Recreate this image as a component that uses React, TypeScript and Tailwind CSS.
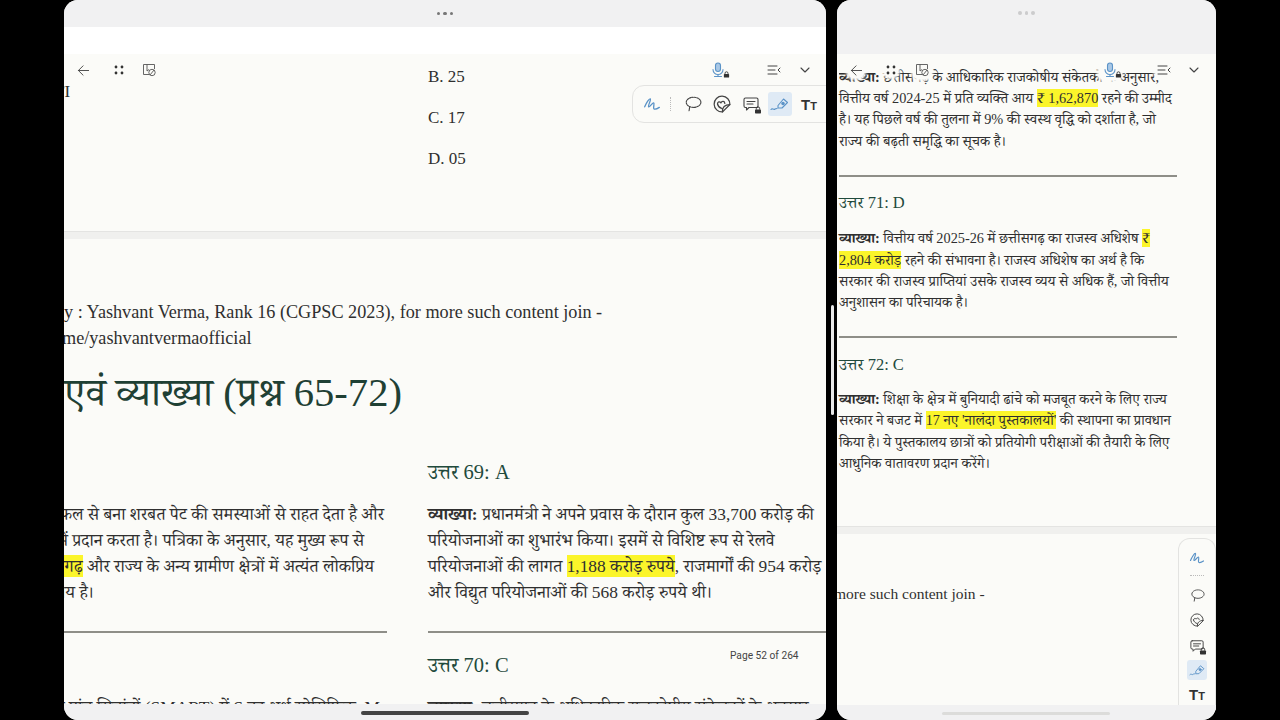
import React from 'react';

const serif = "font-['Liberation_Serif','Noto_Serif_Devanagari','Noto_Sans_Devanagari','Noto_Sans',serif]";

const Hl: React.FC<{ children: React.ReactNode }> = ({ children }) => (
  <span className="bg-[#fbf52a] py-[1px]">{children}</span>
);

const Scribble = ({ className }: { className: string }) => (
  <svg viewBox="0 0 16 16" fill="none" stroke="#5b93c7" strokeWidth="1.2" strokeLinecap="round" strokeLinejoin="round" className={className}>
    <path d="M1.5 10.5 C3 7 5.5 3 6.5 3.5 C7.5 4 4 10 5 10.5 C6 11 8.5 6.5 9.5 7 C10.5 7.5 8.5 12 10 12.5 C11 12.8 13 12 14.5 11" />
  </svg>
);

const Lasso = ({ className }: { className: string }) => (
  <svg viewBox="0 0 16 16" fill="none" stroke="#444" strokeWidth="1" strokeDasharray="1.3 .9" strokeLinecap="round" className={className}>
    <ellipse cx="8.5" cy="6.5" rx="6.5" ry="4.5" />
    <path d="M5 11 L4.5 14" strokeDasharray="none" />
  </svg>
);

const Sticker = ({ className }: { className: string }) => (
  <svg viewBox="0 0 16 16" fill="none" stroke="#444" strokeWidth="1.1" strokeLinecap="round" strokeLinejoin="round" className={className}>
    <path d="M8.5 15 A7 7 0 1 1 15 8.5 Z" />
    <path d="M8.5 15 C8 11 10.5 8.5 15 8.5" />
    <path d="M4 8 C4 6 6 5.5 7 7 C8 5 10.5 5.5 10.5 7.5" />
    <path d="M4 8 C4.5 10 6 11.5 8 12" />
  </svg>
);

const Lock = ({ className }: { className: string }) => (
  <svg viewBox="0 0 8 8" className={className}>
    <path d="M2.3 3.6 V2.6 A1.7 1.7 0 0 1 5.7 2.6 V3.6" fill="none" stroke="#333" strokeWidth="1" />
    <rect x="1" y="3.5" width="6" height="4" rx=".7" fill="#333" />
  </svg>
);

const Comment = ({ className }: { className: string }) => (
  <span className={`relative block ${className}`}>
    <svg viewBox="0 0 16 16" fill="none" stroke="#444" strokeWidth="1.1" strokeLinecap="round" strokeLinejoin="round" className="w-full h-full">
      <path d="M2.5 2 H13.5 A1.5 1.5 0 0 1 15 3.5 V10 A1.5 1.5 0 0 1 13.5 11.5 H6 L3.5 14 V11.5 H2.5 A1.5 1.5 0 0 1 1 10 V3.5 A1.5 1.5 0 0 1 2.5 2 Z" />
      <path d="M4 5.5 H12 M4 8 H10" />
    </svg>
    <Lock className="absolute -right-[3px] -bottom-[2px] w-[8px] h-[8px]" />
  </span>
);

const Highlighter = ({ className }: { className: string }) => (
  <svg viewBox="0 0 20 16" fill="none" stroke="#5b93c7" strokeWidth="1.1" strokeLinecap="round" strokeLinejoin="round" className={className}>
    <path d="M1 13.5 C2.5 11.5 3.5 14.5 5 13 C5.5 12.5 6 12.5 7 12.5" />
    <path d="M8 12 L8 9.5 L13.5 3 L17.5 6.5 L12 12 Z" />
    <circle cx="13" cy="7.5" r="1.2" fill="#5b93c7" />
  </svg>
);

const TextSize = () => (
  <span className="font-['Liberation_Sans',sans-serif] font-bold text-[#333] leading-none flex items-end">
    <span className="text-[15px]">T</span>
    <span className="text-[11px]">T</span>
  </span>
);

const BackArrow = ({ className }: { className: string }) => (
  <svg viewBox="0 0 14 14" fill="none" stroke="#444" strokeWidth="1" strokeLinecap="round" strokeLinejoin="round" className={className}>
    <path d="M1.5 7 H12.5 M6.5 2 L1.5 7 L6.5 12" />
  </svg>
);

const Dots = () => (
  <svg viewBox="0 0 10 10" className="w-[10px] h-[10px]" fill="#333">
    <circle cx="2" cy="2" r="1.4" />
    <circle cx="8" cy="2" r="1.4" />
    <circle cx="2" cy="8" r="1.4" />
    <circle cx="8" cy="8" r="1.4" />
  </svg>
);

const BookmarkOff = () => (
  <svg viewBox="0 0 14 14" fill="none" stroke="#555" strokeWidth=".9" className="w-[14px] h-[14px]">
    <path d="M7 11.5 H1.5 V1.5 H12.5 V6" />
    <path d="M5 1.5 V8 L7 6.5" />
    <circle cx="10" cy="9.5" r="3.2" />
    <path d="M8 12 L12 7" />
  </svg>
);

const Mic = () => (
  <span className="relative block w-[14px] h-[16px]">
    <svg viewBox="0 0 14 16" fill="none" stroke="#5b93c7" strokeWidth="1.1" strokeLinecap="round" className="w-full h-full">
      <rect x="4.5" y="1" width="5" height="8.5" rx="2.5" fill="#a9c8e6" />
      <path d="M2 7.5 A5 5 0 0 0 12 7.5 M7 12.5 V14.5 M3.5 14.5 H10.5" />
    </svg>
    <Lock className="absolute -right-[5px] bottom-0 w-[7px] h-[7px]" />
  </span>
);

const Outline = () => (
  <svg viewBox="0 0 14 10" fill="none" stroke="#444" strokeWidth="1" strokeLinecap="round" strokeLinejoin="round" className="w-[14px] h-[10px]">
    <path d="M1 1 H10 M1 5 H8 M1 9 H10 M13 3 L11 5 L13 7" />
  </svg>
);

const Chevron = () => (
  <svg viewBox="0 0 10 6" fill="none" stroke="#444" strokeWidth="1.1" strokeLinecap="round" strokeLinejoin="round" className="w-[10px] h-[6px]">
    <path d="M1 1 L5 5 L9 1" />
  </svg>
);

const Grabber = ({ dim }: { dim?: boolean }) => (
  <div className={`flex gap-[3px] ${dim ? 'opacity-30' : ''}`}>
    <span className="w-[3.5px] h-[3.5px] rounded-full bg-[#777]" />
    <span className="w-[3.5px] h-[3.5px] rounded-full bg-[#777]" />
    <span className="w-[3.5px] h-[3.5px] rounded-full bg-[#777]" />
  </div>
);

const Rule = ({ className = '' }: { className?: string }) => (
  <div className={`h-[2px] bg-[#8e8e88] ${className}`} />
);

const ClipLine: React.FC<{ className: string; children: React.ReactNode }> = ({ className, children }) => (
  <div className={`h-[26px] leading-[26px] flex justify-end whitespace-nowrap overflow-hidden ${className}`}>
    <span className="shrink-0">{children}</span>
  </div>
);

// the cream smudge the floating toolbar leaves behind its icons
const Patch: React.FC<{ className: string; children: React.ReactNode }> = ({ className, children }) => (
  <span className={`flex items-center justify-center bg-[#fbfbf8] rounded-[6px] shadow-[0_0_3px_2px_#fbfbf8] ${className}`}>
    {children}
  </span>
);

const LeftPanel = () => (
  <div className={`relative w-[762px] h-[720px] shrink-0 overflow-hidden rounded-[14px] bg-[#fbfbf8] text-[#2f2f2f] ${serif}`}>
    <div className="h-[27px] bg-[#f1f1f2] flex items-center justify-center">
      <Grabber />
    </div>
    <div className="h-[27px] bg-white" />
    <div className="h-[177px] relative pl-[364px] pt-[2px] text-[17px] leading-[41px]">
      <div className="absolute -left-[10px] top-[28px] text-[17px] leading-[20px]">TI</div>
      <div>B. 25</div>
      <div>C. 17</div>
      <div>D. 05</div>
    </div>
    <div className="h-[8px] bg-[#f0f0ee] border-t border-[#e4e4e2]" />
    <div className="pt-[60px] whitespace-nowrap text-[18.2px] leading-[26px]">
      <div>y : Yashvant Verma, Rank 16 (CGPSC 2023), for more such content join -</div>
      <div className="-ml-[2px]">me/yashvantvermaofficial</div>
    </div>
    <div className="mt-[17px] h-[50px] leading-[50px] text-[40.6px] text-[#1f4034] whitespace-nowrap">एवं व्याख्या (प्रश्न 65-72)</div>
    <div className="mt-[42px] grid grid-cols-[323px_398px] gap-x-[41px] text-[17.4px]">
      <div className="pt-[41px]">
        <ClipLine className="pr-[3px]">शहद और फल से बना शरबत पेट की समस्याओं से राहत देता है और</ClipLine>
        <ClipLine className="pr-[23px]">में प्रदान करता है। पत्रिका के अनुसार, यह मुख्य रूप से</ClipLine>
        <ClipLine className="pr-[13px]"><Hl>छत्तीसगढ़</Hl> और राज्य के अन्य ग्रामीण क्षेत्रों में अत्यंत लोकप्रिय</ClipLine>
        <ClipLine className="pr-[293px]">प्रिय है।</ClipLine>
        <Rule className="mt-[26px]" />
      </div>
      <div>
        <div className="h-[24px] leading-[24px] text-[20.5px] text-[#1f4a3c]">उत्तर 69: A</div>
        <div className="mt-[17px] whitespace-nowrap leading-[26px]">
          <div><b>व्याख्या:</b> प्रधानमंत्री ने अपने प्रवास के दौरान कुल 33,700 करोड़ की</div>
          <div>परियोजनाओं का शुभारंभ किया। इसमें से विशिष्ट रूप से रेलवे</div>
          <div>परियोजनाओं की लागत <Hl>1,188 करोड़ रुपये</Hl>, राजमार्गों की 954 करोड़</div>
          <div>और विद्युत परियोजनाओं की 568 करोड़ रुपये थी।</div>
        </div>
        <Rule className="mt-[26px]" />
        <div className="mt-[20px] h-[24px] leading-[24px] text-[20.5px] text-[#1f4a3c]">उत्तर 70: C</div>
      </div>
    </div>
    <div className="grid grid-cols-[323px_398px] gap-x-[41px] mt-[17px] text-[17.4px] whitespace-nowrap h-[26px] overflow-hidden leading-[26px]">
      <div className="flex justify-end overflow-hidden pr-[7px]"><span className="shrink-0">लक्ष्य निर्धारण के पांच सिद्धांतों (SMART) में S का अर्थ स्पेसिफिक, M</span></div>
      <div><b>व्याख्या:</b> छत्तीसगढ़ के अधिकारिक राजकोषीय संकेतकों के अनुसार</div>
    </div>

    <div className="absolute left-[666px] top-[649px] font-['Roboto',sans-serif] text-[10.2px] leading-[14px] text-[#444]">Page 52 of 264</div>

    <div className="absolute left-0 right-0 top-[54px] px-[13px] h-[32px] flex items-center pointer-events-none">
      <BackArrow className="w-[13px] h-[13px]" />
      <span className="ml-[24px]"><Dots /></span>
      <span className="ml-[18px]"><BookmarkOff /></span>
      <span className="ml-auto mr-[3px] flex items-center">
        <Mic />
        <span className="ml-[42px]"><Outline /></span>
        <span className="ml-[19px]"><Chevron /></span>
      </span>
    </div>

    <div className="absolute left-[568px] top-[85px] w-[220px] h-[38px] rounded-[12px] border border-[#e3e3e1] bg-[#fbfbf8] flex items-center pl-[10px] gap-[9px]">
      <Scribble className="w-[18px] h-[18px]" />
      <span className="h-[14px] border-l border-dotted border-[#bbb] mr-[4px]" />
      <Lasso className="w-[18px] h-[18px]" />
      <Sticker className="w-[18px] h-[18px] ml-[2px]" />
      <Comment className="w-[16px] h-[16px] ml-[3px]" />
      <span className="w-[24px] h-[24px] rounded-[3px] bg-[#dfeaf5] flex items-center justify-center">
        <Highlighter className="w-[20px] h-[16px]" />
      </span>
      <TextSize />
    </div>

    <div className="absolute left-0 right-0 bottom-0 h-[16px] bg-[#f1f1f2]" />
    <div className="absolute left-[297px] bottom-[5px] w-[168px] h-[4px] rounded-full bg-[#444]" />
  </div>
);

const RightPanel = () => (
  <div className={`relative w-[379px] h-[720px] shrink-0 overflow-hidden rounded-[14px] bg-[#fbfbf8] text-[#2f2f2f] ${serif}`}>
    <div className="h-[54px] bg-[#f1f1f2] flex justify-center pt-[11px]">
      <Grabber dim />
    </div>
    <div className="pl-[2px] text-[14.3px] leading-[21.4px] whitespace-nowrap">
      <div className="pt-[13px] overflow-hidden h-[34px] leading-[21px]"><b>व्याख्या:</b> छत्तीसगढ़ के आधिकारिक राजकोषीय संकेतकों के अनुसार,</div>
      <div>वित्तीय वर्ष 2024-25 में प्रति व्यक्ति आय <Hl>₹ 1,62,870</Hl> रहने की उम्मीद</div>
      <div>है। यह पिछले वर्ष की तुलना में 9% की स्वस्थ वृद्धि को दर्शाता है, जो</div>
      <div>राज्य की बढ़ती समृद्धि का सूचक है।</div>
      <Rule className="w-[338px] mt-[23px]" />
      <div className="mt-[16px] h-[20px] leading-[20px] text-[16.5px] text-[#1f4a3c]">उत्तर 71: D</div>
      <div className="mt-[15px]"><b>व्याख्या:</b> वित्तीय वर्ष 2025-26 में छत्तीसगढ़ का राजस्व अधिशेष <Hl>₹</Hl></div>
      <div><Hl>2,804 करोड़</Hl> रहने की संभावना है। राजस्व अधिशेष का अर्थ है कि</div>
      <div>सरकार की राजस्व प्राप्तियां उसके राजस्व व्यय से अधिक हैं, जो वित्तीय</div>
      <div>अनुशासन का परिचायक है।</div>
      <Rule className="w-[338px] mt-[22px]" />
      <div className="mt-[17px] h-[20px] leading-[20px] text-[16.5px] text-[#1f4a3c]">उत्तर 72: C</div>
      <div className="mt-[14px]"><b>व्याख्या:</b> शिक्षा के क्षेत्र में बुनियादी ढांचे को मजबूत करने के लिए राज्य</div>
      <div>सरकार ने बजट में <Hl>17 नए 'नालंदा पुस्तकालयों'</Hl> की स्थापना का प्रावधान</div>
      <div>किया है। ये पुस्तकालय छात्रों को प्रतियोगी परीक्षाओं की तैयारी के लिए</div>
      <div>आधुनिक वातावरण प्रदान करेंगे।</div>
    </div>
    <div className="mt-[52px] h-[8px] bg-[#f0f0ee] border-t border-[#e4e4e2]" />
    <div className="mt-[50px] -ml-[3px] text-[15.5px] leading-[20px] whitespace-nowrap">more such content join -</div>

    <div className="absolute left-[11px] right-0 top-[54px] h-[32px] flex items-center pointer-events-none">
      <Patch className="w-[16px] h-[16px]"><BackArrow className="w-[13px] h-[13px]" /></Patch>
      <Patch className="w-[14px] h-[14px] ml-[20px]"><Dots /></Patch>
      <Patch className="w-[18px] h-[18px] ml-[15px]"><BookmarkOff /></Patch>
      <span className="ml-auto mr-[17px] flex items-center">
        <Patch className="w-[22px] h-[20px]"><Mic /></Patch>
        <Patch className="w-[18px] h-[14px] ml-[34px]"><Outline /></Patch>
        <span className="ml-[16px]"><Chevron /></span>
      </span>
    </div>

    <div className="absolute right-0 top-[538px] w-[38px] h-[172px] rounded-tl-[12px] rounded-tr-[12px] border border-b-0 border-[#e3e3e1] bg-[#fbfbf8] flex flex-col items-center pt-[11px] gap-[7px]">
      <Scribble className="w-[16px] h-[16px]" />
      <span className="w-[14px] border-t border-dotted border-[#bbb] my-[2px]" />
      <Lasso className="w-[15px] h-[15px] mt-[3px]" />
      <Sticker className="w-[14px] h-[14px] mt-[3px]" />
      <Comment className="w-[14px] h-[14px] mt-[5px]" />
      <span className="w-[20px] h-[20px] rounded-[3px] bg-[#dfeaf5] flex items-center justify-center">
        <Highlighter className="w-[17px] h-[14px]" />
      </span>
      <TextSize />
    </div>

    <div className="absolute left-0 right-0 bottom-0 h-[15px] bg-[#f1f1f2]" />
    <div className="absolute left-[105px] bottom-[5px] w-[168px] h-[3px] rounded-full bg-[#dcdcda]" />
  </div>
);

export default function App() {
  return (
    <div className="w-[1280px] h-[720px] bg-black overflow-hidden flex pl-[64px] gap-[11px] relative">
      <LeftPanel />
      <RightPanel />
      <div className="absolute left-[831px] top-[305px] w-[3px] h-[110px] rounded-full bg-[#e8e8e8]" />
    </div>
  );
}
